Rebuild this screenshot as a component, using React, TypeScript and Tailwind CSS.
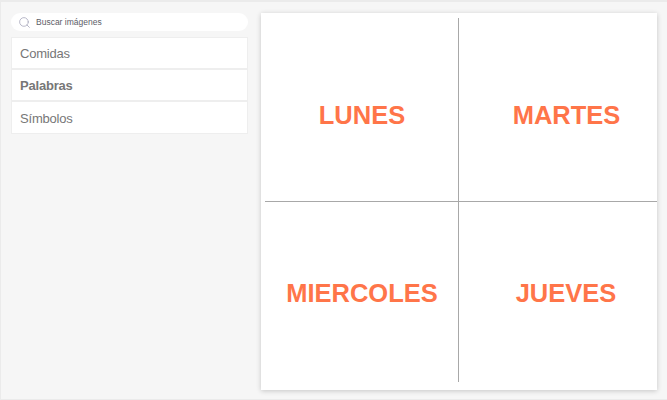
import { Search } from "lucide-react";

const days = [
  { label: "LUNES", cls: "border-r border-b pt-[12px] pl-[1px]" },
  { label: "MARTES", cls: "border-b pt-[12px] pl-[17px]" },
  { label: "MIERCOLES", cls: "border-r pt-[3px] pl-[1px]" },
  { label: "JUEVES", cls: "pt-[3px] pl-[16px]" },
];

const categories = [
  { label: "Comidas", active: false },
  { label: "Palabras", active: true },
  { label: "Símbolos", active: false },
];

export default function App() {
  return (
    <div className="flex h-[400px] w-[667px] gap-[13px] border-t-2 border-l border-b border-[#ebebeb] bg-[#f6f6f6] pt-[11px] pr-[10px] pl-[10px] pb-[9px] font-['Liberation_Sans',sans-serif]">
      <aside className="flex w-[237px] shrink-0 flex-col gap-[6px]">
        <div className="flex h-[18px] items-center gap-[5px] rounded-full bg-white pl-[7px]">
          <Search className="h-[13px] w-[13px] text-[#a9a9bc]" strokeWidth={1.5} />
          <span className="pt-[1px] text-[8.5px] text-[#5d5d68]">Buscar imágenes</span>
        </div>
        <ul className="border border-[#eeeeee] bg-white">
          {categories.map((c, i) => (
            <li
              key={c.label}
              className={`flex items-center pt-[2px] pl-[8px] text-[13px] tracking-[-0.2px] text-[#777777] ${i < 2 ? "h-[32px] border-b-2 border-[#eeeeee]" : "h-[31px]"} ${c.active ? "font-bold" : ""}`}
            >
              {c.label}
            </li>
          ))}
        </ul>
      </aside>
      <main className="h-[377px] w-[396px] bg-white pt-[5px] pb-[8px] pl-[4px] shadow-[0_1px_5px_rgba(0,0,0,0.2)]">
        <div className="grid h-full grid-cols-[194px_198px] grid-rows-[184px_180px]">
          {days.map((d) => (
            <div
              key={d.label}
              className={`flex items-center justify-center border-[#a8a8a8] text-[25.5px] font-bold text-[#ff7549] ${d.cls}`}
            >
              {d.label}
            </div>
          ))}
        </div>
      </main>
    </div>
  );
}
